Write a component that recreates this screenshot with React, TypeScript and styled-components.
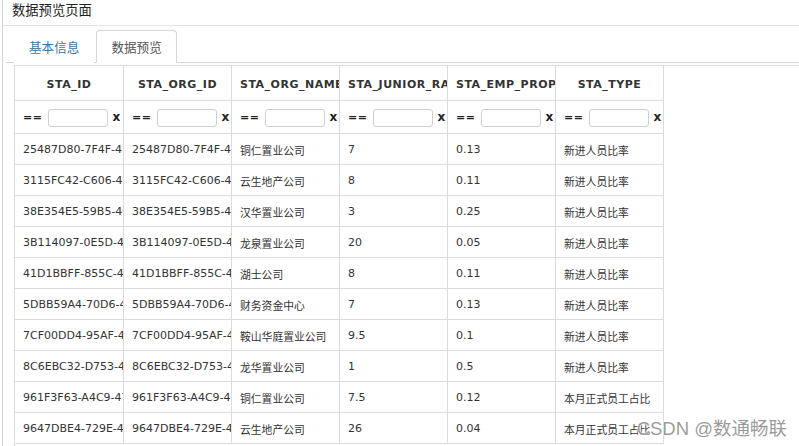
import styled, { createGlobalStyle } from "styled-components";

const GlobalStyle = createGlobalStyle`
  html, body {
    margin: 0;
    padding: 0;
    background: #fff;
    overflow: hidden;
  }
  body {
    font-family: "DejaVu Sans", "Noto Sans CJK SC", sans-serif;
    color: #333;
  }
`;

const Frame = styled.div`
  position: relative;
  margin-left: 2px;
  border-left: 1px solid #d4d4d4;
  height: 446px;
  overflow: hidden;
`;

const EdgeMark = styled.div<{ $top: number; $height: number }>`
  position: absolute;
  left: -3px;
  top: ${(p) => p.$top}px;
  width: 2px;
  height: ${(p) => p.$height}px;
  background: #6f9fd0;
`;

const TitleBar = styled.div`
  height: 26px;
  box-sizing: border-box;
  padding-left: 9px;
  border-bottom: 1px solid #e3e3e3;
  font-family: "Noto Sans CJK SC", sans-serif;
  font-size: 13.3px;
  line-height: 19px;
  color: #222;
`;

const TabArea = styled.div`
  padding-left: 3px;
`;

const TabBar = styled.div`
  display: flex;
  align-items: flex-end;
  gap: 2px;
  height: 37px;
  box-sizing: border-box;
  padding-left: 8px;
  border-bottom: 1px solid #d6d6d6;
`;

const Tab = styled.div<{ $active?: boolean }>`
  height: 33px;
  box-sizing: border-box;
  margin-bottom: -1px;
  padding: 0 14px;
  border: 1px solid ${(p) => (p.$active ? "#d6d6d6" : "transparent")};
  border-bottom-color: ${(p) => (p.$active ? "#fff" : "transparent")};
  border-radius: 4px 4px 0 0;
  background: #fff;
  font-family: "Noto Sans CJK SC", sans-serif;
  font-size: 12.6px;
  line-height: 31px;
  color: ${(p) => (p.$active ? "#555" : "#3a77a8")};
`;

const GridPanel = styled.div`
  margin: 2px 0 0 8px;
  height: 400px;
  border-top: 1px solid #dcdcdc;
  border-left: 1px solid #dcdcdc;
`;

const Row = styled.div<{ $height: number }>`
  display: grid;
  grid-template-columns: 109px repeat(5, 108px);
  height: ${(p) => p.$height}px;
`;

const BaseCell = styled.div`
  box-sizing: border-box;
  border-right: 1px solid #dcdcdc;
  border-bottom: 1px solid #dcdcdc;
  padding: 0 8px;
  overflow: hidden;
  white-space: nowrap;
`;

const HeaderCell = styled(BaseCell)`
  text-align: center;
  font-weight: bold;
  font-size: 11px;
  letter-spacing: 0.5px;
  line-height: 38px;
  color: #333;
`;

const FilterCell = styled(BaseCell)`
  display: flex;
  align-items: center;
  font-size: 11px;
  font-weight: bold;
  color: #222;
`;

const Operator = styled.span`
  letter-spacing: 0.5px;
`;

const FilterInput = styled.input`
  width: 60px;
  height: 18px;
  box-sizing: border-box;
  margin: 1px 4px 0 6px;
  padding: 0 3px;
  border: 1px solid #cfcfcf;
  border-radius: 3px;
  outline: none;
  font-size: 11px;
`;

const Clear = styled.span`
  font-size: 12px;
`;

const Cell = styled(BaseCell)`
  font-size: 11px;
  line-height: 32px;
  color: #333;
`;

const CjkText = styled.span`
  font-family: "Noto Sans CJK SC", sans-serif;
  font-size: 10.8px;
`;

const Watermark = styled.div`
  position: absolute;
  right: 12px;
  bottom: 6px;
  font-family: "Liberation Sans", "Noto Sans CJK SC", sans-serif;
  font-size: 18.5px;
  color: rgba(120, 120, 120, 0.75);
  text-shadow: 0 0 2px #fff, 0 0 2px #fff;
  pointer-events: none;
`;

const columns = [
  "STA_ID",
  "STA_ORG_ID",
  "STA_ORG_NAME",
  "STA_JUNIOR_RATE",
  "STA_EMP_PROPORTION",
  "STA_TYPE",
];

const rows = [
  ["25487D80-7F4F-43A1-9B2C-6D1E8F0A4C21", "铜仁置业公司", "7", "0.13", "新进人员比率"],
  ["3115FC42-C606-4E7B-8A19-2F3D5C6B7E90", "云生地产公司", "8", "0.11", "新进人员比率"],
  ["38E354E5-59B5-4C2D-A1F0-9B8E7D6C5A43", "汉华置业公司", "3", "0.25", "新进人员比率"],
  ["3B114097-0E5D-4F8A-B3C2-1D0E9F8A7B65", "龙泉置业公司", "20", "0.05", "新进人员比率"],
  ["41D1BBFF-855C-4A6B-9C8D-7E6F5A4B3C21", "湖士公司", "8", "0.11", "新进人员比率"],
  ["5DBB59A4-70D6-4B1C-8D2E-3F4A5B6C7D89", "财务资金中心", "7", "0.13", "新进人员比率"],
  ["7CF00DD4-95AF-4E3D-A2B1-0C9D8E7F6A54", "鞍山华庭置业公司", "9.5", "0.1", "新进人员比率"],
  ["8C6EBC32-D753-4A9B-B8C7-6D5E4F3A2B10", "龙华置业公司", "1", "0.5", "新进人员比率"],
  ["961F3F63-A4C9-47D2-9E1F-0A2B3C4D5E67", "铜仁置业公司", "7.5", "0.12", "本月正式员工占比"],
  ["9647DBE4-729E-4C5B-A6D7-8E9F0A1B2C34", "云生地产公司", "26", "0.04", "本月正式员工占比"],
];

function App() {
  return (
    <>
      <GlobalStyle />
      <Frame>
        <EdgeMark $top={0} $height={5} />
        <EdgeMark $top={30} $height={6} />
        <TitleBar>数据预览页面</TitleBar>
        <TabArea>
          <TabBar>
            <Tab>基本信息</Tab>
            <Tab $active>数据预览</Tab>
          </TabBar>
          <GridPanel>
            <Row $height={35}>
              {columns.map((c) => (
                <HeaderCell key={c}>{c}</HeaderCell>
              ))}
            </Row>
            <Row $height={33}>
              {columns.map((c) => (
                <FilterCell key={c}>
                  <Operator>==</Operator>
                  <FilterInput type="text" />
                  <Clear>x</Clear>
                </FilterCell>
              ))}
            </Row>
            {rows.map(([id, name, junior, prop, type]) => (
              <Row $height={31} key={id}>
                <Cell>{id}</Cell>
                <Cell>{id}</Cell>
                <Cell>
                  <CjkText>{name}</CjkText>
                </Cell>
                <Cell>{junior}</Cell>
                <Cell>{prop}</Cell>
                <Cell>
                  <CjkText>{type}</CjkText>
                </Cell>
              </Row>
            ))}
          </GridPanel>
        </TabArea>
        <Watermark>CSDN @数通畅联</Watermark>
      </Frame>
    </>
  );
}

export default App;
